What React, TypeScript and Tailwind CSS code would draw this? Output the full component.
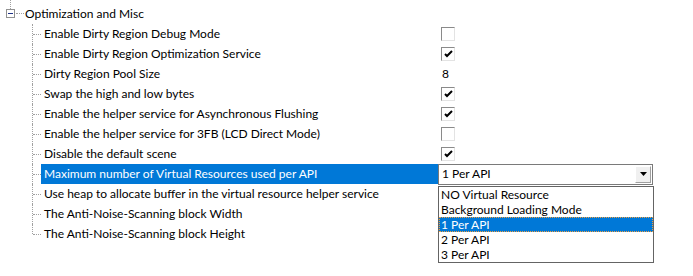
import React from 'react';

type Value =
  | { kind: 'check'; checked: boolean }
  | { kind: 'text'; text: string }
  | { kind: 'combo'; text: string }
  | { kind: 'none' };

interface PropRow {
  label: string;
  value: Value;
  selected?: boolean;
}

const rows: PropRow[] = [
  { label: 'Enable Dirty Region Debug Mode', value: { kind: 'check', checked: false } },
  { label: 'Enable Dirty Region Optimization Service', value: { kind: 'check', checked: true } },
  { label: 'Dirty Region Pool Size', value: { kind: 'text', text: '8' } },
  { label: 'Swap the high and low bytes', value: { kind: 'check', checked: true } },
  { label: 'Enable the helper service for Asynchronous Flushing', value: { kind: 'check', checked: true } },
  { label: 'Enable the helper service for 3FB (LCD Direct Mode)', value: { kind: 'check', checked: false } },
  { label: 'Disable the default scene', value: { kind: 'check', checked: true } },
  {
    label: 'Maximum number of Virtual Resources used per API',
    value: { kind: 'combo', text: '1 Per API' },
    selected: true,
  },
  { label: 'Use heap to allocate buffer in the virtual resource helper service', value: { kind: 'none' } },
  { label: 'The Anti-Noise-Scanning block Width', value: { kind: 'none' } },
  { label: 'The Anti-Noise-Scanning block Height', value: { kind: 'none' } },
];

const options = ['NO Virtual Resource', 'Background Loading Mode', '1 Per API', '2 Per API', '3 Per API'];

function CheckBox({ checked }: { checked: boolean }) {
  return (
    <div className="ml-[3px] flex h-[14px] w-[14px] items-center justify-center border-t border-l border-r border-b border-t-[#8a8a8a] border-l-[#8a8a8a] border-r-[#e3e3e3] border-b-[#e3e3e3] bg-white">
      {checked && (
        <svg width="9" height="8" viewBox="0 0 9 8">
          <path d="M1 4 L3 6 L8 1" stroke="#000" strokeWidth="2" fill="none" />
        </svg>
      )}
    </div>
  );
}

function Combo({ text }: { text: string }) {
  return (
    <div className="relative">
      <div className="flex h-[21px] w-[215px] items-center border border-[#7a7a7a] bg-white">
        <span className="flex-1 pl-[3px]">{text}</span>
        <div className="mr-[1px] flex h-[17px] w-[16px] items-center justify-center border border-t-white border-l-white border-r-[#a0a0a0] border-b-[#a0a0a0] bg-[#f0f0f0]">
          <svg width="7" height="4" viewBox="0 0 7 4">
            <path d="M0 0 H7 L3.5 4 Z" fill="#000" />
          </svg>
        </div>
      </div>
      {/* open dropdown list */}
      <div className="absolute left-0 top-[22px] z-10 w-[216px] border border-[#646464] bg-white">
        {options.map((o) => (
          <div
            key={o}
            className={
              o === text
                ? 'h-[15px] overflow-hidden border border-dotted border-[#f0a040] bg-[#0078d7] pl-[1px] leading-[13px] text-white'
                : 'h-[15px] overflow-hidden pl-[2px] leading-[15px]'
            }
          >
            {o}
          </div>
        ))}
      </div>
    </div>
  );
}

function ValueCell({ value }: { value: Value }) {
  switch (value.kind) {
    case 'check':
      return <CheckBox checked={value.checked} />;
    case 'text':
      return <span className="pl-[4px]">{value.text}</span>;
    case 'combo':
      return <Combo text={value.text} />;
    default:
      return null;
  }
}

export default function App() {
  return (
    <div
      className="h-[276px] w-[693px] overflow-hidden bg-white pt-[4px] text-[12px] text-black"
      style={{ fontFamily: 'Lato, "Noto Sans", sans-serif' }}
    >
      {/* group header */}
      <div className="flex h-[20px] items-center">
        <div className="relative h-full w-[25px] shrink-0">
          <div className="absolute left-[10px] top-[-4px] h-[9px] border-l border-dotted border-[#a0a0a0]" />
          <div className="absolute left-[6px] top-[5px] flex h-[9px] w-[9px] items-center justify-center border border-[#919191] bg-white">
            <div className="h-px w-[5px] bg-[#1e3287]" />
          </div>
          <div className="absolute left-[16px] top-[9px] w-[8px] border-t border-dotted border-[#a0a0a0]" />
        </div>
        <span>Optimization and Misc</span>
      </div>

      {/* child properties */}
      {rows.map((r, i) => (
        <div key={r.label} className="flex h-[20px] items-center">
          <div className="relative h-full w-[41px] shrink-0">
            <div
              className={
                i === rows.length - 1
                  ? 'absolute left-[32px] top-0 h-[10px] border-l border-dotted border-[#a0a0a0]'
                  : 'absolute left-[32px] top-0 h-[20px] border-l border-dotted border-[#a0a0a0]'
              }
            />
            <div className="absolute left-[33px] top-[10px] w-[8px] border-t border-dotted border-[#a0a0a0]" />
          </div>
          <div
            className={
              r.selected
                ? 'flex h-full w-[397px] shrink-0 items-center whitespace-nowrap bg-[#0078d7] pl-[3px] text-white'
                : 'flex h-full w-[397px] shrink-0 items-center whitespace-nowrap pl-[3px]'
            }
          >
            {r.label}
          </div>
          <div className="flex h-full flex-1 items-center">
            <ValueCell value={r.value} />
          </div>
        </div>
      ))}
    </div>
  );
}
